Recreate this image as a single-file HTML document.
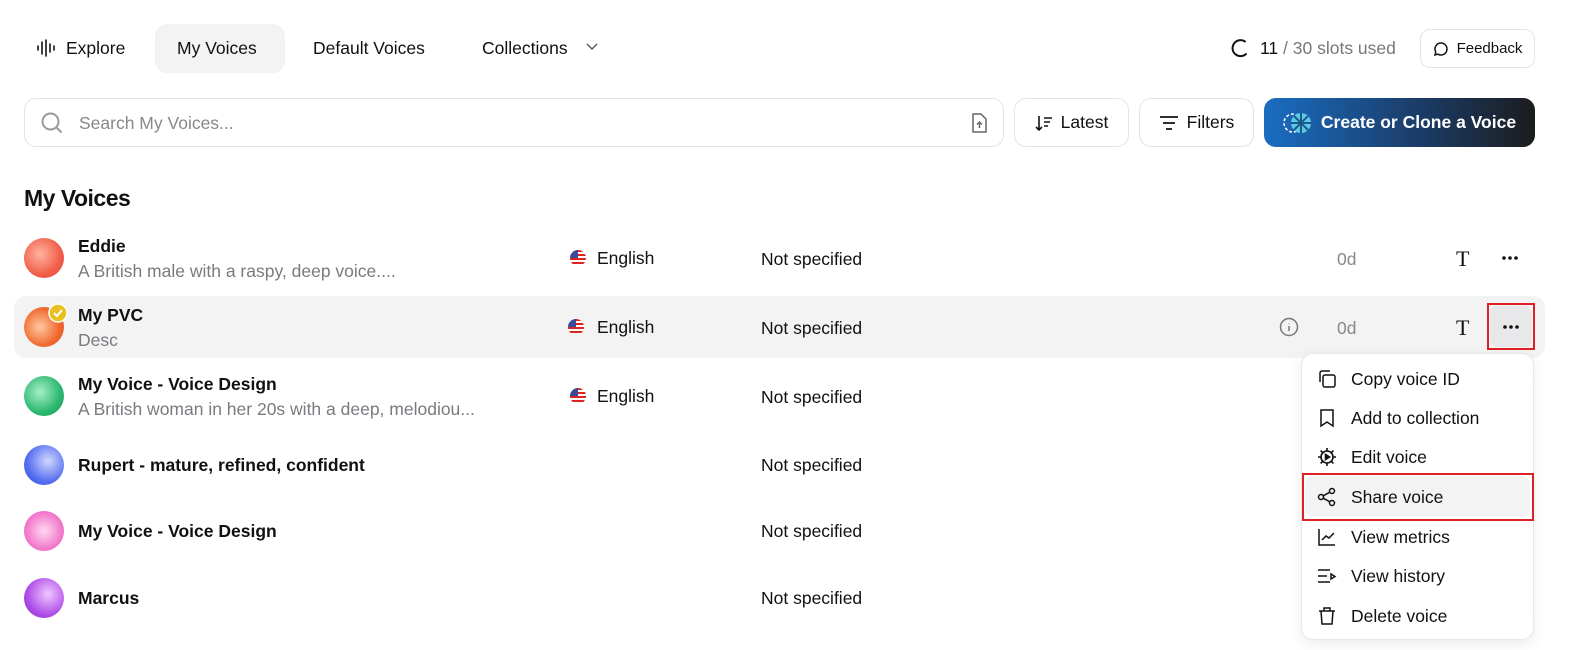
<!DOCTYPE html>
<html><head><meta charset="utf-8"><style>
*{box-sizing:border-box;margin:0;padding:0}
body{width:1588px;height:650px;background:#fff;font-family:"Liberation Sans",sans-serif;color:#111;position:relative;overflow:hidden;font-size:17.5px}
.a{position:absolute;white-space:nowrap}
.btn{position:absolute;border:1px solid #e4e4e7;border-radius:12px;background:#fff;display:flex;align-items:center;justify-content:center;gap:8px;font-size:17.5px}
.av{position:absolute;left:24px;width:40px;height:40px;border-radius:50%}
.nm{position:absolute;left:78px;font-size:17.5px;font-weight:bold;color:#111}
.ds{position:absolute;left:78px;font-size:17.5px;color:#7a7a80}
.mi{position:absolute;left:1351px;font-size:17.5px;color:#111}
.ic{position:absolute;left:1317px}
svg{display:block}
</style></head><body>
<svg class="a" style="left:36px;top:39px" width="20" height="18" viewBox="0 0 20 18" stroke="#111" stroke-width="1.6" stroke-linecap="round"><path d="M2 7v4M6 3v12M10 1v16M14 5v8M18 7v4"/></svg>
<div class="a" style="left:66px;top:38px">Explore</div>
<div class="a" style="left:155px;top:24px;width:130px;height:49px;background:#f3f3f3;border-radius:12px"></div>
<div class="a" style="left:177px;top:38px">My Voices</div>
<div class="a" style="left:313px;top:38px">Default Voices</div>
<div class="a" style="left:482px;top:38px">Collections</div>
<svg class="a" style="left:586px;top:43px" width="12" height="8" viewBox="0 0 12 8" fill="none" stroke="#555" stroke-width="1.4"><path d="M1 1l5 5 5-5"/></svg>
<svg class="a" style="left:1229px;top:38px" width="20" height="20" viewBox="0 0 20 20" fill="none" stroke="#111" stroke-width="2" stroke-linecap="round"><path d="M16 3.5A8 8 0 1 0 17 16"/></svg>
<div class="a" style="left:1260px;top:38px;color:#111">11 <span style="color:#777">/ 30 slots used</span></div>
<div class="btn" style="left:1420px;top:29px;width:115px;height:39px;border-radius:10px;font-size:15px"><svg width="16" height="16" viewBox="0 0 16 16" fill="none" stroke="#111" stroke-width="1.5"><path d="M8 2a6 6 0 1 1-3 11.2L2 14l.8-3A6 6 0 0 1 8 2z"/></svg>Feedback</div>
<div class="a" style="left:24px;top:98px;width:980px;height:49px;border:1px solid #e4e4e7;border-radius:12px"></div>
<svg class="a" style="left:40px;top:111px" width="24" height="24" viewBox="0 0 24 24" fill="none" stroke="#999" stroke-width="2"><circle cx="10.5" cy="10.5" r="8"/><path d="M16.5 16.5l5 5"/></svg>
<div class="a" style="left:79px;top:113px;color:#888">Search My Voices...</div>
<svg class="a" style="left:970px;top:113px" width="18" height="20" viewBox="0 0 18 20" fill="none" stroke="#666" stroke-width="1.5"><path d="M3 1h8l5 5v13H3z"/><path d="M9.5 15V9M7 11.5l2.5-2.5 2.5 2.5"/></svg>
<div class="btn" style="left:1014px;top:98px;width:115px;height:49px"><svg width="18" height="18" viewBox="0 0 18 18" fill="none" stroke="#111" stroke-width="1.6"><path d="M4 2v14M1 13l3 3 3-3M9 4h8M9 8h6M9 12h4"/></svg>Latest</div>
<div class="btn" style="left:1139px;top:98px;width:115px;height:49px"><svg width="20" height="16" viewBox="0 0 20 16" fill="none" stroke="#111" stroke-width="1.8"><path d="M1 2h18M4 8h12M7 14h6"/></svg>Filters</div>
<div class="btn" style="left:1264px;top:98px;width:271px;height:49px;border:none;background:linear-gradient(90deg,#1a6dc2,#1b3a63 60%,#1c1c1e);color:#fff;font-weight:bold"><svg width="30" height="24" viewBox="0 0 30 24"><circle cx="10" cy="12" r="9" fill="none" stroke="#fff" stroke-width="1.5" stroke-dasharray="3 2"/><circle cx="18" cy="12" r="10" fill="#5ec8e6"/><path d="M18 2v20M8 12h20M11 5l14 14M25 5L11 19" stroke="#1a5a8a" stroke-width="2"/></svg>Create or Clone a Voice</div>
<div class="a" style="left:24px;top:185px;font-size:23px;font-weight:bold;letter-spacing:-0.5px">My Voices</div>
<div class="a" style="left:14px;top:296px;width:1531px;height:62px;background:#f3f3f3;border-radius:12px"></div>
<div class="av" style="top:238px;background:radial-gradient(circle at 40% 40%,#ffb3a0,#f0604a 60%,#e84040)"></div>
<div class="nm" style="top:236px">Eddie</div><div class="ds" style="top:261px">A British male with a raspy, deep voice....</div>
<div class="av" style="top:307px;background:radial-gradient(circle at 40% 50%,#ffc9a0,#f06a30 60%,#e04a20)"></div>
<svg class="a" style="left:48px;top:303px" width="20" height="20" viewBox="0 0 20 20"><circle cx="10" cy="10" r="9" fill="#e8c020" stroke="#fff" stroke-width="1.5"/><path d="M6 10l3 3 5-6" fill="none" stroke="#fff" stroke-width="2"/></svg>
<div class="nm" style="top:305px">My PVC</div><div class="ds" style="top:330px">Desc</div>
<div class="av" style="top:376px;background:radial-gradient(circle at 40% 40%,#a8f0c8,#2cb870 60%,#1a9858)"></div>
<div class="nm" style="top:374px">My Voice - Voice Design</div><div class="ds" style="top:399px">A British woman in her 20s with a deep, melodiou...</div>
<div class="av" style="top:445px;background:radial-gradient(circle at 60% 40%,#d0d8ff,#5870f0 60%,#2a48d8)"></div>
<div class="nm" style="top:455px">Rupert - mature, refined, confident</div>
<div class="av" style="top:511px;background:radial-gradient(circle at 50% 50%,#ffd8f0,#f070c8 70%,#e040b0)"></div>
<div class="nm" style="top:521px">My Voice - Voice Design</div>
<div class="av" style="top:578px;background:radial-gradient(circle at 60% 40%,#f0c8ff,#b050e8 60%,#7a28c8)"></div>
<div class="nm" style="top:588px">Marcus</div>
<svg class="a" style="left:570px;top:250px" width="16" height="16" viewBox="0 0 16 16"><clipPath id="c"><circle cx="8" cy="8" r="8"/></clipPath><g clip-path="url(#c)"><rect width="16" height="16" fill="#fff"/><path d="M0 1h16M0 5h16M0 9h16M0 13h16" stroke="#d22" stroke-width="2"/><rect width="8" height="8" fill="#3c4a9a"/></g></svg>
<div class="a" style="left:597px;top:248px">English</div>
<svg class="a" style="left:568px;top:319px" width="16" height="16" viewBox="0 0 16 16"><g clip-path="url(#c)"><rect width="16" height="16" fill="#fff"/><path d="M0 1h16M0 5h16M0 9h16M0 13h16" stroke="#d22" stroke-width="2"/><rect width="8" height="8" fill="#3c4a9a"/></g></svg>
<div class="a" style="left:597px;top:317px">English</div>
<svg class="a" style="left:570px;top:388px" width="16" height="16" viewBox="0 0 16 16"><g clip-path="url(#c)"><rect width="16" height="16" fill="#fff"/><path d="M0 1h16M0 5h16M0 9h16M0 13h16" stroke="#d22" stroke-width="2"/><rect width="8" height="8" fill="#3c4a9a"/></g></svg>
<div class="a" style="left:597px;top:386px">English</div>
<div class="a" style="left:761px;top:249px">Not specified</div>
<div class="a" style="left:761px;top:318px">Not specified</div>
<div class="a" style="left:761px;top:387px">Not specified</div>
<div class="a" style="left:761px;top:455px">Not specified</div>
<div class="a" style="left:761px;top:521px">Not specified</div>
<div class="a" style="left:761px;top:588px">Not specified</div>
<svg class="a" style="left:1279px;top:317px" width="20" height="20" viewBox="0 0 20 20" fill="none" stroke="#777" stroke-width="1.5"><circle cx="10" cy="10" r="8.5"/><path d="M10 9v5M10 6v.5"/></svg>
<div class="a" style="left:1337px;top:249px;color:#888">0d</div>
<div class="a" style="left:1337px;top:318px;color:#888">0d</div>
<div class="a" style="left:1456px;top:246px;font-family:'Liberation Serif',serif;font-size:22px">T</div>
<div class="a" style="left:1456px;top:315px;font-family:'Liberation Serif',serif;font-size:22px">T</div>
<svg class="a" style="left:1502px;top:256px" width="16" height="4" viewBox="0 0 16 4" fill="#111"><circle cx="2" cy="2" r="1.8"/><circle cx="8" cy="2" r="1.8"/><circle cx="14" cy="2" r="1.8"/></svg>
<div class="a" style="left:1490px;top:306px;width:42px;height:41px;background:#e8e8ea;border-radius:8px"></div>
<svg class="a" style="left:1503px;top:325px" width="16" height="4" viewBox="0 0 16 4" fill="#111"><circle cx="2" cy="2" r="1.8"/><circle cx="8" cy="2" r="1.8"/><circle cx="14" cy="2" r="1.8"/></svg>
<div class="a" style="left:1487px;top:303px;width:48px;height:47px;border:2px solid #e01f26"></div>
<div class="a" style="left:1301px;top:353px;width:233px;height:287px;background:#fff;border:1px solid #e8e8ea;border-radius:12px;box-shadow:0 4px 14px rgba(0,0,0,.08)"></div>
<div class="a" style="left:1305px;top:476px;width:225px;height:41px;background:#f3f3f3;border-radius:8px"></div>
<div class="a" style="left:1302px;top:473px;width:232px;height:48px;border:2px solid #e01f26"></div>
<svg class="ic" style="top:369px" width="20" height="20" viewBox="0 0 20 20" fill="none" stroke="#111" stroke-width="1.5"><rect x="6" y="6" width="12" height="12" rx="2"/><path d="M3 13V4a2 2 0 0 1 2-2h8"/></svg>
<div class="mi" style="top:369px">Copy voice ID</div>
<svg class="ic" style="top:408px" width="20" height="20" viewBox="0 0 20 20" fill="none" stroke="#111" stroke-width="1.5"><path d="M4 2h12v16l-6-4-6 4z"/></svg>
<div class="mi" style="top:408px">Add to collection</div>
<svg class="ic" style="top:447px" width="20" height="20" viewBox="0 0 20 20" fill="none" stroke="#111" stroke-width="1.6"><circle cx="10" cy="10" r="6"/><path d="M10 1v3M10 16v3M1 10h3M16 10h3M3.6 3.6l2 2M14.4 14.4l2 2M3.6 16.4l2-2M14.4 5.6l2-2"/><path d="M8.5 7.5v5l4-2.5z" fill="#111"/></svg>
<div class="mi" style="top:447px">Edit voice</div>
<svg class="ic" style="top:487px" width="20" height="20" viewBox="0 0 20 20" fill="none" stroke="#111" stroke-width="1.5"><circle cx="15" cy="4" r="2.5"/><circle cx="4" cy="10" r="2.5"/><circle cx="15" cy="16" r="2.5"/><path d="M6.2 8.8l6.6-3.6M6.2 11.2l6.6 3.6"/></svg>
<div class="mi" style="top:487px">Share voice</div>
<svg class="ic" style="top:527px" width="20" height="20" viewBox="0 0 20 20" fill="none" stroke="#111" stroke-width="1.5"><path d="M2 2v16h16M5 13l4-4 3 2 5-5"/></svg>
<div class="mi" style="top:527px">View metrics</div>
<svg class="ic" style="top:566px" width="20" height="20" viewBox="0 0 20 20" fill="none" stroke="#111" stroke-width="1.5"><path d="M1 4h12M1 10h9M1 16h12"/><path d="M14 8v5l4-2.5z"/></svg>
<div class="mi" style="top:566px">View history</div>
<svg class="ic" style="top:606px" width="20" height="20" viewBox="0 0 20 20" fill="none" stroke="#111" stroke-width="1.5"><path d="M2 5h16M7 5V2h6v3M4 5l1 13h10l1-13"/></svg>
<div class="mi" style="top:606px">Delete voice</div>
</body></html>
